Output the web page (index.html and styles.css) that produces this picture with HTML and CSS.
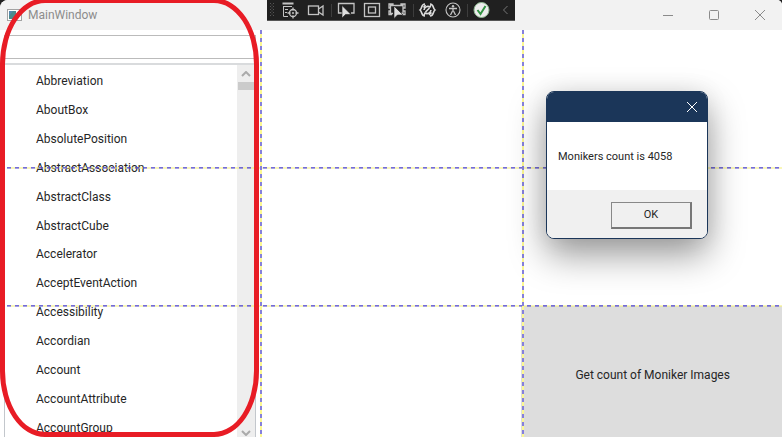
FILE: index.html
```html
<!DOCTYPE html>
<html lang="en">
<head>
<meta charset="utf-8">
<title>MainWindow</title>
<link rel="stylesheet" href="styles.css">
</head>
<body>
<div class="window">
  <header class="titlebar">
    <svg class="app-icon" width="15" height="12" viewBox="0 0 15 12"><rect x=".5" y=".5" width="14" height="11" fill="#fff" stroke="#a3a3a3"/><rect x="2" y="2" width="7" height="8" fill="#4b8b8c"/><path d="M2 2h4L2 7z" fill="#5588ad"/><path d="M11 3h2M11 5h2M11 7h2" stroke="#bbb"/></svg>
    <h1 class="title">MainWindow</h1>
    <div class="caption-buttons">
      <button type="button" aria-label="Minimize"><svg width="12" height="12" viewBox="0 0 12 12"><path d="M1 6.500h10"/></svg></button>
      <button type="button" aria-label="Maximize"><svg width="12" height="12" viewBox="0 0 12 12"><rect x="1.500" y="1.500" width="9" height="9" rx="1"/></svg></button>
      <button type="button" aria-label="Close"><svg width="12" height="12" viewBox="0 0 12 12"><path d="M1 1l10 10M11 1L1 11"/></svg></button>
    </div>
  </header>

  <div class="debug-bar" role="toolbar" aria-label="Debug tools">
    <svg width="248" height="20" viewBox="0 0 248 20" fill="none" stroke="#c4c4c4" stroke-width="1.300">
      <path d="M3.500 3v15M6.500 3v15M5 4.500v12" stroke="#555" stroke-width="1" stroke-dasharray="1 2"/>
      <path d="M15.500 3.500h11" stroke-width="2"/><path d="M17 6.500h8M16.500 6v10.500H21M18 9.500h3M18 12.500h2" stroke-width="1"/>
      <circle cx="26" cy="13" r="3.500"/><path d="M26 7.500v3M26 15.500v3M20.500 13h3M28.500 13h3"/><circle cx="26" cy="13" r="1" fill="#c4c4c4" stroke="none"/>
      <rect x="41.500" y="6" width="10" height="8.500"/><path d="M51.500 9l4.500-3v9l-4.500-3"/>
      <path d="M64.500 4v13M146.500 4v13M200.500 4v13" stroke="#3d3d3d" stroke-width="1"/>
      <path d="M76 13h-4.500V3.500H87V13h-3"/><path d="M75 5.500v12.500l3.500-3.500h5.500z" fill="#ddd" stroke="#202020" stroke-width=".6"/>
      <rect x="97.500" y="3.500" width="15" height="13"/><rect x="101.500" y="7" width="7" height="6"/>
      <path d="M126 13.500h-2.500V5.500H136v8h-2M123.500 8H122V4h4v1.500M136 8h2V4h-4v1.500M135 14.500h3V11h-2M123.500 11H122v3.500h3"/><path d="M127 6v12.500l3.500-3.500h5.500z" fill="#ddd" stroke="#202020" stroke-width=".6"/>
      <path d="M158 4c-4 0-2.500 4-5 6 2.500 2 1 6 5 6M163 4c4 0 2.500 4 5 6-2.500 2-1 6-5 6" stroke="#ddd" stroke-width="1.600"/><path d="M157 10a4 4 0 0 1 6-3l1-2M164 10a4 4 0 0 1-6 3l-1 2M156.500 7.500l2-2.500M162 15l2.500-2.500M158.500 12l4-4" stroke="#ddd" stroke-width="1.600"/>
      <circle cx="186" cy="10" r="7" stroke-width="1.100"/><circle cx="186" cy="6.300" r="1.200" fill="#c4c4c4" stroke="none"/><path d="M182 8.500h8M186 8.500V11M185.500 11l-2 4M186.500 11l2 4"/>
      <circle cx="214.500" cy="10" r="7.500" fill="#ededed" stroke="#8fbb91" stroke-width="1"/><path d="M210.500 10l3 4 5-8" stroke="#329443" stroke-width="2"/>
      <path d="M240.500 6l-4 4 4 4" stroke="#777" stroke-width="1"/>
    </svg>
  </div>

  <main class="grid">
    <section class="picker">
      <input class="search" type="text" aria-label="Filter monikers">
      <div class="listbox">
        <ul class="items">
          <li>Abbreviation</li>
          <li>AboutBox</li>
          <li>AbsolutePosition</li>
          <li>AbstractAssociation</li>
          <li>AbstractClass</li>
          <li>AbstractCube</li>
          <li>Accelerator</li>
          <li>AcceptEventAction</li>
          <li>Accessibility</li>
          <li>Accordian</li>
          <li>Account</li>
          <li>AccountAttribute</li>
          <li>AccountGroup</li>
        </ul>
        <div class="scrollbar">
          <svg width="10" height="6" viewBox="0 0 10 6"><path d="M1 5l4-4 4 4"/></svg>
          <div class="thumb"></div>
          <svg width="10" height="6" viewBox="0 0 10 6"><path d="M1 1l4 4 4-4"/></svg>
        </div>
      </div>
    </section>
    <button type="button" class="count-button">Get count of Moniker Images</button>
    <div class="guides">
      <i class="row-guide first"></i>
      <i class="row-guide second"></i>
      <i class="column-guide first"></i>
      <i class="column-guide second"></i>
    </div>
  </main>

  <div class="highlight"></div>

  <div class="dialog" role="dialog" aria-labelledby="message">
    <div class="dialog-title">
      <button type="button" aria-label="Close dialog"><svg width="12" height="12" viewBox="0 0 12 12"><path d="M1 1l10 10M11 1L1 11"/></svg></button>
    </div>
    <p class="message" id="message">Monikers count is 4058</p>
    <div class="dialog-actions"><button type="button" class="ok">OK</button></div>
  </div>
</div>
</body>
</html>
```
FILE: styles.css
```css
* { box-sizing: border-box; }

body {
  margin: 0;
  background: #222;
  color: #262626;
  font: 12px/16px Roboto, "Open Sans", sans-serif;
}

button { font: inherit; color: inherit; }

.window {
  position: relative;
  display: flex;
  flex-direction: column;
  height: 100vh;
  overflow: hidden;
  background: #fff;
  border-radius: 8px 5px 0 0;
}

.titlebar {
  display: flex;
  align-items: center;
  flex: none;
  height: 30px;
  padding-left: 7px;
  background: #f2f2f2;
}

.title {
  margin: 0 auto 0 6px;
  color: #8c8c8c;
  font-size: 12px;
  font-weight: 400;
}

.caption-buttons { display: flex; }

.caption-buttons button {
  display: grid;
  place-items: center;
  width: 46px;
  height: 28px;
  padding: 0 0 0 2px;
  border: 0;
  background: none;
}

.caption-buttons svg { fill: none; stroke: #8b8b8b; }

.debug-bar {
  position: absolute;
  top: 0;
  left: 50%;
  height: 21px;
  margin-left: -124px;
  background: #202020;
  border-bottom: 1px solid #555;
}

.debug-bar svg { display: block; }

.grid {
  position: relative;
  flex: 1;
  min-height: 0;
  display: grid;
  grid-template-columns: repeat(3, 1fr);
  grid-template-rows: 138px 138px minmax(0, 1fr);
}

.picker {
  grid-area: 1 / 1 / 4 / 2;
  display: flex;
  flex-direction: column;
  gap: 4px;
  min-height: 0;
  padding: 5px 5px 0 4px;
}

.search {
  flex: none;
  width: 100%;
  height: 24px;
  padding: 0 4px;
  border: 1px solid #bbb;
  font: inherit;
}

.listbox {
  flex: 1;
  display: flex;
  min-height: 0;
  overflow: hidden;
  border: 1px solid #c3c7cc;
  border-top: 2px solid #d9dbdd;
  border-bottom: 0;
}

/* The last row runs past the window's lower edge. */
.items {
  flex: 1;
  display: flex;
  flex-direction: column;
  height: 377px;
  margin: 0;
  padding: 2px 0 0 31px;
  list-style: none;
}

.items li {
  flex: 1;
  display: flex;
  align-items: center;
}

.scrollbar {
  display: flex;
  flex-direction: column;
  align-items: center;
  width: 18px;
  padding: 6px 0 1px;
  background: #eee;
}

.scrollbar svg { fill: none; stroke: #aaa; stroke-width: 2; }

.thumb {
  width: 16px;
  height: 8px;
  margin: 5px 0 auto;
  background: #cbcbcb;
}

.count-button {
  grid-area: 3 / 3;
  border: 0;
  border-radius: 0;
  padding: 6px 0 0 2px;
  background: #ddd;
}

/* Dashed lines over the row and column boundaries. */
.guides {
  position: absolute;
  inset: 0;
  pointer-events: none;
}

.guides i { position: absolute; }

.row-guide {
  left: 7px;
  right: 0;
  height: 2px;
  background:
    repeating-linear-gradient(90deg, #5148cacc 0 4px, #f4f07c88 4px 8px) top / 100% 1px no-repeat,
    repeating-linear-gradient(90deg, #5148ca88 0 4px, #f4f07c88 4px 8px) bottom / 100% 1px no-repeat;
}

.row-guide.first { top: 137px; }
.row-guide.second { top: 275px; }

.column-guide {
  top: 0;
  bottom: 0;
  width: 2px;
  background: repeating-linear-gradient(#8580db 0 4px, #fcf891 4px 8px);
}

.column-guide.first { left: calc(100% / 3 - 1px); }
.column-guide.second { left: calc(200% / 3 + 1px); }

/* Annotation outline round the picker. */
.highlight {
  position: absolute;
  inset: -2px auto 0 0;
  width: 259px;
  border: 5px solid #e81c25;
  border-radius: 45px / 66px;
  pointer-events: none;
}

.dialog {
  position: absolute;
  top: 91px;
  right: 74px;
  width: 162px;
  overflow: hidden;
  background: #fff;
  border: 1px solid #1b3659;
  border-radius: 8px;
  font-size: 11px;
  box-shadow: 0 16px 36px #0006, 0 0 24px #0001;
}

.dialog-title {
  display: flex;
  justify-content: flex-end;
  height: 30px;
  background: #1b3659;
}

.dialog-title button {
  display: grid;
  place-items: center;
  width: 30px;
  padding: 0;
  border: 0;
  background: none;
}

.dialog-title svg { fill: none; stroke: #fff; }

.message {
  margin: 0;
  padding: 27px 11px 25px;
}

.dialog-actions {
  display: flex;
  justify-content: flex-end;
  padding: 12px 15px 9px;
  background: #f0f0f0;
}

.ok {
  width: 81px;
  height: 27px;
  padding: 0;
  border: 1px solid #888;
  border-right: 2px solid #777;
  border-bottom: 2px solid #777;
  border-radius: 0;
  background: #f0f0f0;
}
```
